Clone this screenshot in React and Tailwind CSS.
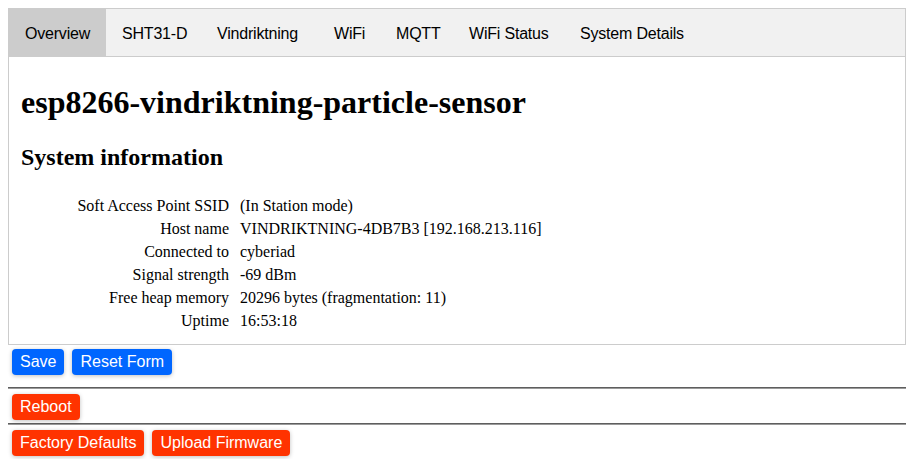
import React, { useState } from 'react';

const tabs = [
  { name: 'Overview', width: 'w-[97px]' },
  { name: 'SHT31-D', width: 'w-[95px]' },
  { name: 'Vindriktning', width: 'w-[117px]' },
  { name: 'WiFi', width: 'w-[62px]' },
  { name: 'MQTT', width: 'w-[73px]' },
  { name: 'WiFi Status', width: 'w-[111px]' },
  { name: 'System Details', width: 'w-[136px]' },
];

const info = [
  ['Soft Access Point SSID', '(In Station mode)'],
  ['Host name', 'VINDRIKTNING-4DB7B3 [192.168.213.116]'],
  ['Connected to', 'cyberiad'],
  ['Signal strength', '-69 dBm'],
  ['Free heap memory', '20296 bytes (fragmentation: 11)'],
  ['Uptime', '16:53:18'],
];

const Button = ({ color, children }) => (
  <button
    type="button"
    className={`m-1 h-[26px] px-2 rounded-[4px] text-white text-[16px] leading-[26px] shadow-[0_1px_4px_rgba(0,0,0,0.25)] ${
      color === 'red' ? 'bg-[#ff3300]' : 'bg-[#0066ff]'
    }`}
  >
    {children}
  </button>
);

const Rule = ({ className }) => (
  <div className={`h-[2px] border-t border-b border-t-[#5e5e5e] border-b-[#9a9a9a] ${className}`} />
);

const App = () => {
  const [active, setActive] = useState('Overview');

  return (
    <div className="p-2 font-['Liberation_Sans',Arial,sans-serif] text-black bg-white">
      <div className="flex border border-[#cccccc] bg-[#f1f1f1]">
        {tabs.map((tab) => (
          <button
            key={tab.name}
            type="button"
            onClick={() => setActive(tab.name)}
            className={`${tab.width} pl-4 text-left whitespace-nowrap pt-[15px] pb-[13px] text-[16px] leading-[19px] tracking-[-0.2px] ${
              active === tab.name ? 'bg-[#cccccc]' : 'hover:bg-[#dddddd]'
            }`}
          >
            {tab.name}
          </button>
        ))}
      </div>

      <div className="border border-t-0 border-[#cccccc] px-3 pt-1.5 pb-[12px] font-['Liberation_Serif','Times_New_Roman',serif]">
        <h1 className="mt-[21px] mb-[22px] text-[32px] leading-[37px] font-bold">esp8266-vindriktning-particle-sensor</h1>
        <h2 className="mb-[23px] text-[24px] leading-[28px] font-bold">System information</h2>
        <div className="grid grid-cols-[208px_1fr] gap-x-[11px] text-[16px]">
          {info.map(([label, value]) => (
            <React.Fragment key={label}>
              <div className="h-[23px] leading-[23px] text-right">{label}</div>
              <div className="h-[23px] leading-[23px]">{value}</div>
            </React.Fragment>
          ))}
        </div>
      </div>

      <div className="flex">
        <Button>Save</Button>
        <Button>Reset Form</Button>
      </div>
      <Rule className="mt-2 mb-px" />
      <div className="flex">
        <Button color="red">Reboot</Button>
      </div>
      <Rule className="-mt-px mb-px" />
      <div className="flex">
        <Button color="red">Factory Defaults</Button>
        <Button color="red">Upload Firmware</Button>
      </div>
    </div>
  );
};

export default App;
